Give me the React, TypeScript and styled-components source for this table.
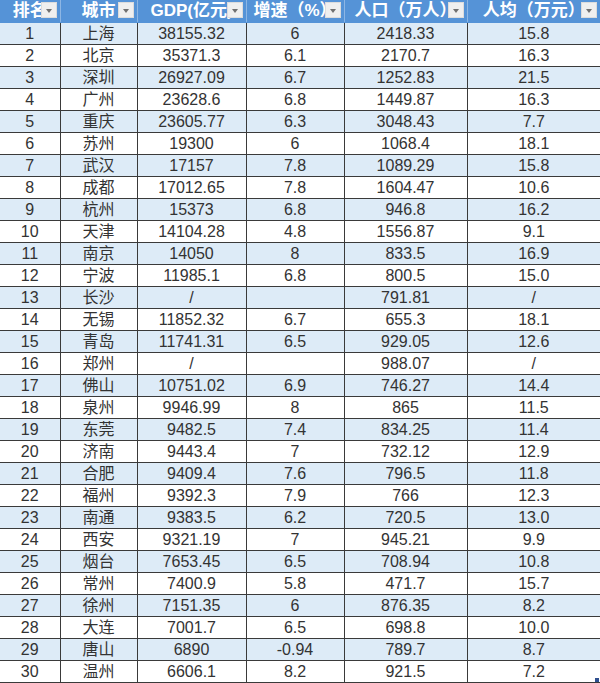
import styled, { createGlobalStyle } from "styled-components";

type Row = [number, string, string, string, string, string];

const ROWS: Row[] = [
  [1, "上海", "38155.32", "6", "2418.33", "15.8"],
  [2, "北京", "35371.3", "6.1", "2170.7", "16.3"],
  [3, "深圳", "26927.09", "6.7", "1252.83", "21.5"],
  [4, "广州", "23628.6", "6.8", "1449.87", "16.3"],
  [5, "重庆", "23605.77", "6.3", "3048.43", "7.7"],
  [6, "苏州", "19300", "6", "1068.4", "18.1"],
  [7, "武汉", "17157", "7.8", "1089.29", "15.8"],
  [8, "成都", "17012.65", "7.8", "1604.47", "10.6"],
  [9, "杭州", "15373", "6.8", "946.8", "16.2"],
  [10, "天津", "14104.28", "4.8", "1556.87", "9.1"],
  [11, "南京", "14050", "8", "833.5", "16.9"],
  [12, "宁波", "11985.1", "6.8", "800.5", "15.0"],
  [13, "长沙", "/", "", "791.81", "/"],
  [14, "无锡", "11852.32", "6.7", "655.3", "18.1"],
  [15, "青岛", "11741.31", "6.5", "929.05", "12.6"],
  [16, "郑州", "/", "", "988.07", "/"],
  [17, "佛山", "10751.02", "6.9", "746.27", "14.4"],
  [18, "泉州", "9946.99", "8", "865", "11.5"],
  [19, "东莞", "9482.5", "7.4", "834.25", "11.4"],
  [20, "济南", "9443.4", "7", "732.12", "12.9"],
  [21, "合肥", "9409.4", "7.6", "796.5", "11.8"],
  [22, "福州", "9392.3", "7.9", "766", "12.3"],
  [23, "南通", "9383.5", "6.2", "720.5", "13.0"],
  [24, "西安", "9321.19", "7", "945.21", "9.9"],
  [25, "烟台", "7653.45", "6.5", "708.94", "10.8"],
  [26, "常州", "7400.9", "5.8", "471.7", "15.7"],
  [27, "徐州", "7151.35", "6", "876.35", "8.2"],
  [28, "大连", "7001.7", "6.5", "698.8", "10.0"],
  [29, "唐山", "6890", "-0.94", "789.7", "8.7"],
  [30, "温州", "6606.1", "8.2", "921.5", "7.2"],
];

const COLUMNS = [
  { title: "排名", width: 60 },
  { title: "城市", width: 77 },
  { title: "GDP(亿元)", width: 109 },
  { title: "增速（%）", width: 98 },
  { title: "人口（万人）", width: 123 },
  { title: "人均（万元）", width: 133 },
];

const GlobalStyle = createGlobalStyle`
  body {
    margin: 0;
    background: #ffffff;
    font-family: "Liberation Sans", "Noto Sans CJK SC", sans-serif;
  }
`;

const Sheet = styled.div`
  position: relative;
  width: 600px;
  height: 683px;
  overflow: hidden;
`;

const Table = styled.table`
  width: 600px;
  table-layout: fixed;
  border-collapse: collapse;
`;

const HeadCell = styled.th`
  position: relative;
  height: 22px;
  padding: 0;
  background: #5593d7;
  color: #ffffff;
  font-size: 17px;
  font-weight: 700;
  line-height: 22px;
  text-align: center;
  white-space: nowrap;
  overflow: hidden;
  border-left: 1px solid #8db6e4;
  border-bottom: 1px solid #5593d7;

  &:first-child {
    border-left: none;
  }
`;

const FilterButton = styled.span`
  position: absolute;
  top: 2px;
  right: 3px;
  width: 16px;
  height: 16px;
  box-sizing: border-box;
  background: #efefef;
  border: 1px solid #dcdcdc;
  display: flex;
  align-items: center;
  justify-content: center;

  &::after {
    content: "";
    width: 0;
    height: 0;
    margin-top: 1px;
    border-left: 3.5px solid transparent;
    border-right: 3.5px solid transparent;
    border-top: 4px solid #707070;
  }
`;

const BodyRow = styled.tr<{ $shade: boolean }>`
  background: ${(p) => (p.$shade ? "#ddebf7" : "#ffffff")};
`;

const Cell = styled.td`
  height: 21px;
  padding: 0;
  font-size: 16px;
  line-height: 21px;
  color: #333333;
  text-align: center;
  white-space: nowrap;
  border-left: 1px solid #3a3a3a;
  border-bottom: 1px solid #3a3a3a;

  &:first-child {
    border-left: none;
  }
`;

const FillHandle = styled.span`
  position: absolute;
  right: 1px;
  bottom: 1px;
  width: 4px;
  height: 4px;
  background: #2f4f8f;
`;

export default function App() {
  return (
    <Sheet>
      <GlobalStyle />
      <Table>
        <colgroup>
          {COLUMNS.map((c) => (
            <col key={c.title} style={{ width: c.width }} />
          ))}
        </colgroup>
        <thead>
          <tr>
            {COLUMNS.map((c) => (
              <HeadCell key={c.title}>
                {c.title}
                <FilterButton />
              </HeadCell>
            ))}
          </tr>
        </thead>
        <tbody>
          {ROWS.map((r) => (
            <BodyRow key={r[0]} $shade={r[0] % 2 === 1}>
              {r.map((v, i) => (
                <Cell key={i}>{v}</Cell>
              ))}
            </BodyRow>
          ))}
        </tbody>
      </Table>
      <FillHandle />
    </Sheet>
  );
}
